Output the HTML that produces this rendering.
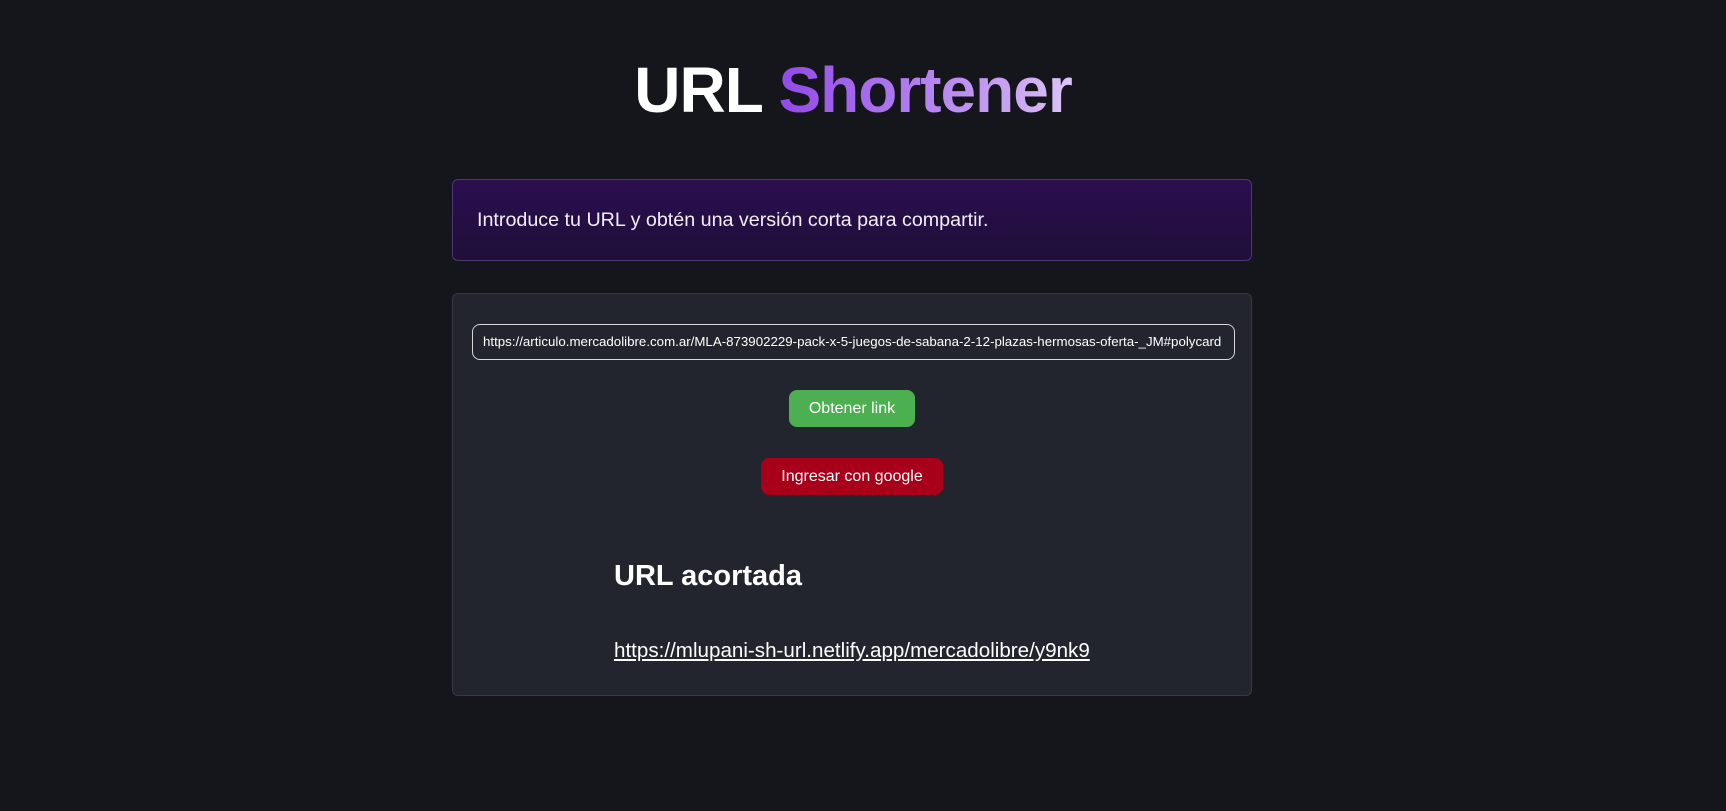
<!DOCTYPE html>
<html><head><meta charset="utf-8"><style>
html,body{margin:0;padding:0;background:#15161b;width:1726px;height:811px;overflow:hidden;font-family:"Liberation Sans",sans-serif;color:#fff}
h1{position:absolute;top:48px;left:-10px;width:1726px;text-align:center;margin:0;font-size:64px;font-weight:bold;line-height:84px;letter-spacing:-1px}
h1 .s{background:linear-gradient(90deg,#9148e8,#c9a5f2 80%,#dcc6f7);-webkit-background-clip:text;background-clip:text;color:transparent}
.b1{position:absolute;left:452px;top:179px;width:800px;height:82px;border:1px solid #4a3872;border-radius:6px;background:linear-gradient(180deg,#2b0e50,#1f0f38);box-sizing:border-box}
.b1 p{margin:0;position:absolute;left:24px;top:29px;font-size:19.7px;color:#f2eef8}
.b2{position:absolute;left:452px;top:293px;width:800px;height:403px;border:1px solid #363944;border-radius:6px;background:#22252d;box-sizing:border-box}
.inp{position:absolute;left:19px;top:30px;width:763px;height:36px;border:1px solid #d8d8d8;border-radius:8px;box-sizing:border-box;font-size:13.3px;line-height:34px;padding-left:10px;white-space:nowrap;overflow:hidden;color:#fff}
.btn{position:absolute;border-radius:8px;font-size:16px;text-align:center;line-height:37px;height:37px}
.g{left:336px;top:96px;width:126px;background:#4caf50}
.r{left:308px;top:164px;width:182px;background:#a8001a}
h2{position:absolute;left:161px;top:266px;margin:0;font-size:29px;font-weight:bold}
a{position:absolute;left:161px;top:345px;color:#fff;font-size:20.6px;text-decoration:underline}
</style></head><body>
<h1>URL <span class="s">Shortener</span></h1>
<div class="b1"><p>Introduce tu URL y obtén una versión corta para compartir.</p></div>
<div class="b2">
<div class="inp">https://articulo.mercadolibre.com.ar/MLA-873902229-pack-x-5-juegos-de-sabana-2-12-plazas-hermosas-oferta-_JM#polycard</div>
<div class="btn g">Obtener link</div>
<div class="btn r">Ingresar con google</div>
<h2>URL acortada</h2>
<a>https://mlupani-sh-url.netlify.app/mercadolibre/y9nk9</a>
</div>
</body></html>
